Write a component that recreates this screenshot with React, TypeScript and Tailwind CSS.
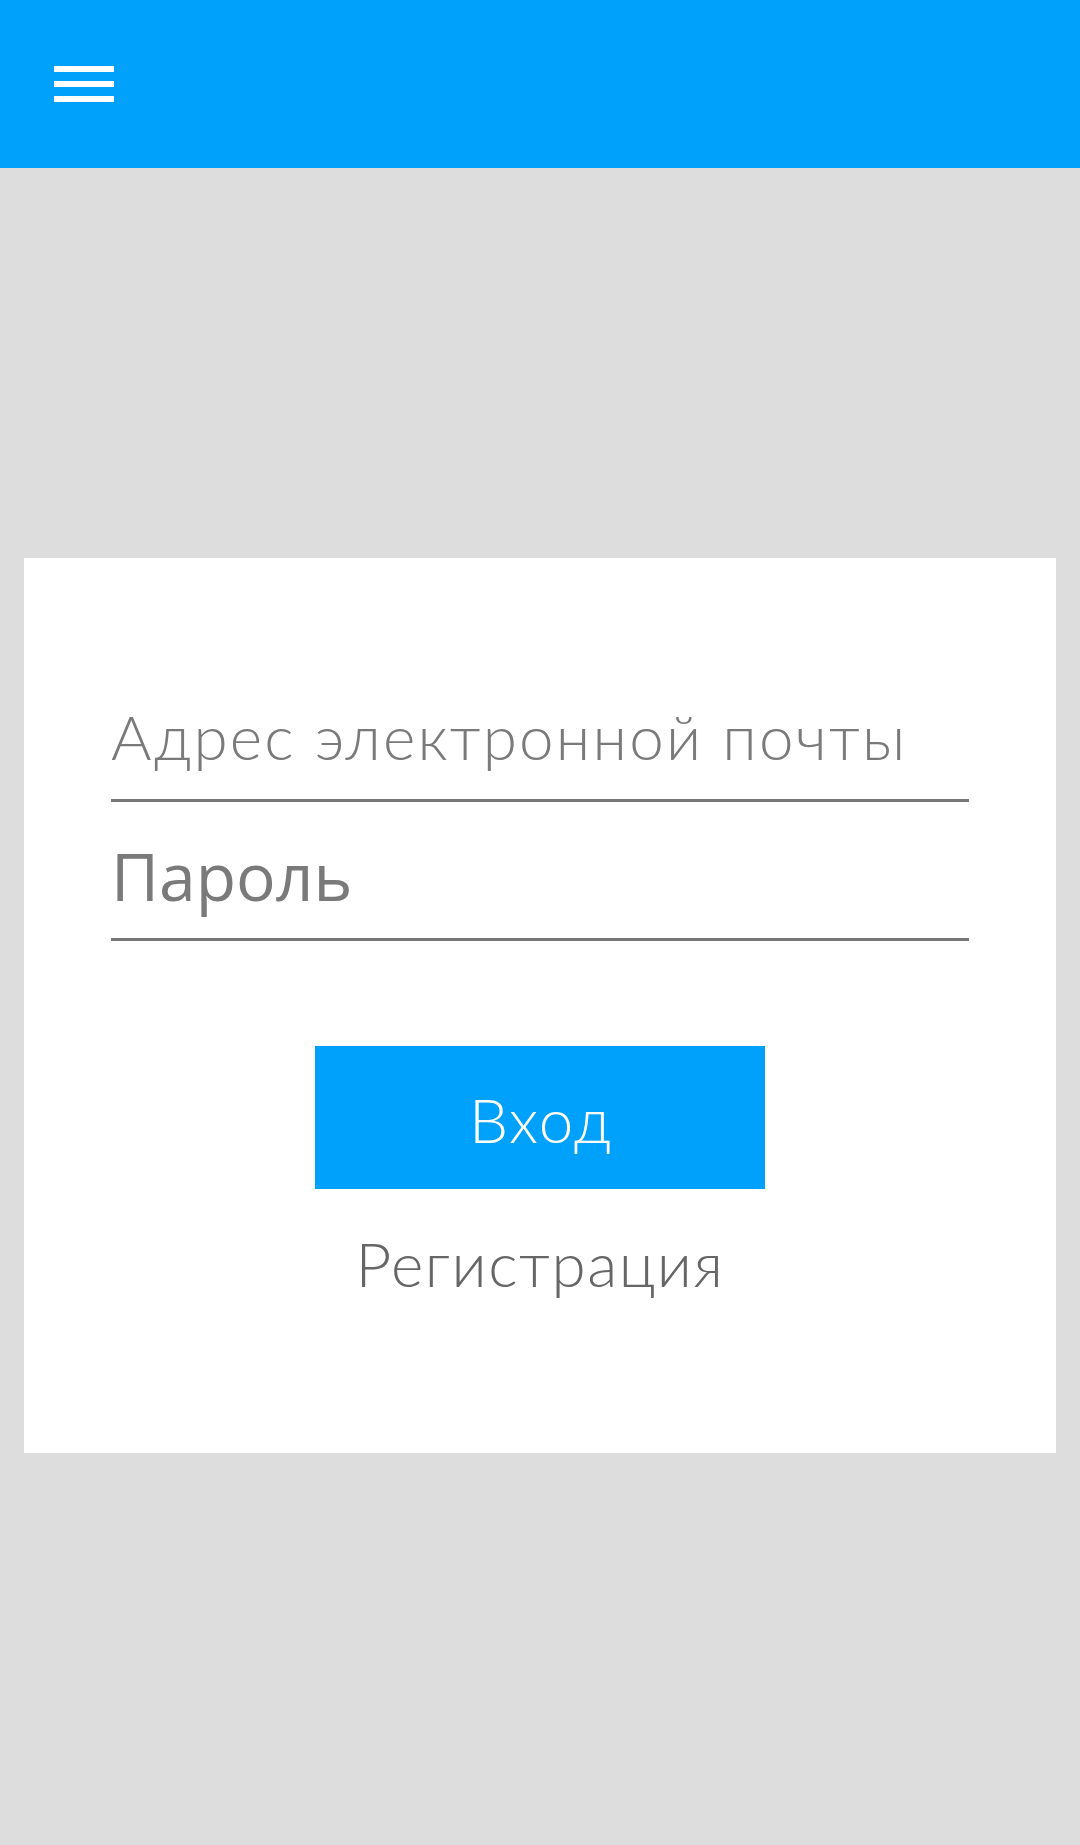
import React from "react";

export default function App() {
  return (
    <div className="min-h-[1845px] w-full bg-[#dddddd]" style={{ fontFamily: "Lato, 'Open Sans', sans-serif" }}>
      <header className="h-[168px] w-full bg-[#00a1fa] flex items-start">
        <button className="ml-[54px] mt-[66px] flex flex-col gap-[9px]" aria-label="menu">
          <span className="block w-[60px] h-[6px] bg-white" />
          <span className="block w-[60px] h-[6px] bg-white" />
          <span className="block w-[60px] h-[6px] bg-white" />
        </button>
      </header>

      <main className="mx-[24px] mt-[390px] h-[895px] bg-white px-[87px] pt-[147px] flex flex-col">
        <div className="border-b-[3px] border-[#777777] pb-[32px]">
          <div className="h-[62px] text-[62px] leading-[62px] font-light tracking-[2.2px] text-[#7a7a7a] whitespace-nowrap" style={{ fontFamily: "Lato, sans-serif" }}>
            Адрес электронной почты
          </div>
        </div>
        <div className="mt-[40px] border-b-[3px] border-[#777777] pb-[30px]">
          <div className="h-[66px] text-[66px] leading-[66px] font-normal text-[#7a7a7a] whitespace-nowrap" style={{ fontFamily: "'Open Sans', 'Noto Sans', sans-serif" }}>
            Пароль
          </div>
        </div>
        <div className="mt-[105px] flex justify-center">
          <button className="w-[450px] h-[143px] bg-[#00a1fa] flex items-center justify-center pt-[3px] pl-[2px]">
            <span className="text-[62px] leading-[62px] font-light tracking-[2px] text-white" style={{ fontFamily: "Lato, sans-serif" }}>Вход</span>
          </button>
        </div>
        <div className="mt-[43px] flex justify-center">
          <span className="text-[62px] leading-[62px] font-light tracking-[1.6px] text-[#666666]" style={{ fontFamily: "Lato, sans-serif" }}>Регистрация</span>
        </div>
      </main>
    </div>
  );
}
